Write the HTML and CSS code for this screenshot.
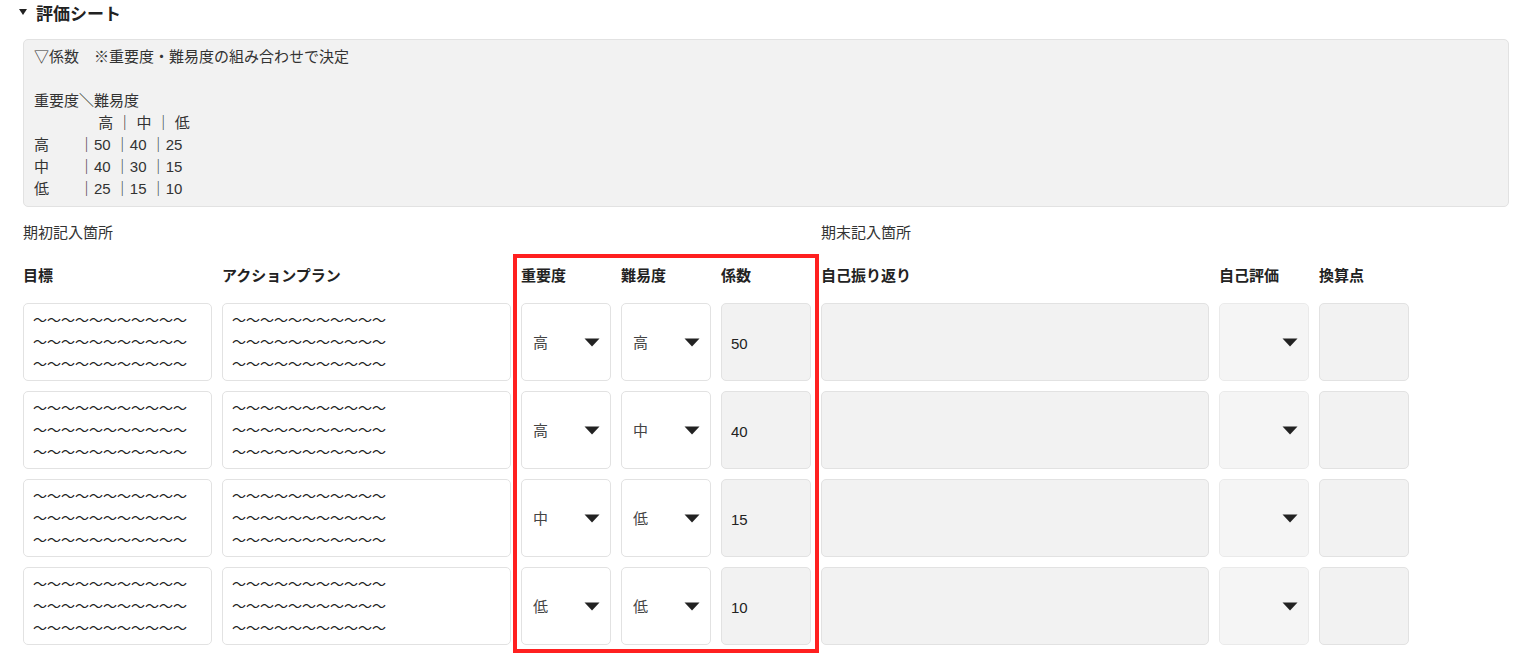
FILE: index.html
```html
<!DOCTYPE html>
<html lang="ja">
  <head>
    <meta charset="UTF-8" />
    <meta name="viewport" content="width=device-width, initial-scale=1.0" />
    <title>評価シート</title>
    <link rel="stylesheet" href="styles.css">
  </head>
  <body>
    <details class="sheet" open>
      <summary class="sheet-title">評価シート</summary>

      <div class="coef-note">▽係数　※重要度・難易度の組み合わせで決定

重要度＼難易度
　　　　 高 ｜ 中 ｜ 低
高　　｜50 ｜40 ｜25
中　　｜40 ｜30 ｜15
低　　｜25 ｜15 ｜10</div>

      <div class="eval-grid">
        <div class="section-label start">期初記入箇所</div>
        <div class="section-label end">期末記入箇所</div>

        <div class="col-head">目標</div>
        <div class="col-head">アクションプラン</div>
        <div class="col-head">重要度</div>
        <div class="col-head">難易度</div>
        <div class="col-head">係数</div>
        <div class="col-head">自己振り返り</div>
        <div class="col-head">自己評価</div>
        <div class="col-head">換算点</div>

        <!-- row 1 -->
        <textarea class="field">〜〜〜〜〜〜〜〜〜〜〜
〜〜〜〜〜〜〜〜〜〜〜
〜〜〜〜〜〜〜〜〜〜〜</textarea>
        <textarea class="field">〜〜〜〜〜〜〜〜〜〜〜
〜〜〜〜〜〜〜〜〜〜〜
〜〜〜〜〜〜〜〜〜〜〜</textarea>
        <div class="select-wrap">
          <select class="field"><option selected>高</option><option>中</option><option>低</option></select>
          <svg class="caret" width="16" height="9" viewBox="0 0 16 9"><path d="M0.5 0.5 H15.5 L8 8.5 Z" /></svg>
        </div>
        <div class="select-wrap">
          <select class="field"><option selected>高</option><option>中</option><option>低</option></select>
          <svg class="caret" width="16" height="9" viewBox="0 0 16 9"><path d="M0.5 0.5 H15.5 L8 8.5 Z" /></svg>
        </div>
        <input class="field readonly num" type="text" value="50" readonly />
        <textarea class="field readonly" readonly></textarea>
        <div class="select-wrap">
          <select class="field readonly" disabled><option></option></select>
          <svg class="caret" width="16" height="9" viewBox="0 0 16 9"><path d="M0.5 0.5 H15.5 L8 8.5 Z" /></svg>
        </div>
        <input class="field readonly num" type="text" value="" readonly />

        <!-- row 2 -->
        <textarea class="field">〜〜〜〜〜〜〜〜〜〜〜
〜〜〜〜〜〜〜〜〜〜〜
〜〜〜〜〜〜〜〜〜〜〜</textarea>
        <textarea class="field">〜〜〜〜〜〜〜〜〜〜〜
〜〜〜〜〜〜〜〜〜〜〜
〜〜〜〜〜〜〜〜〜〜〜</textarea>
        <div class="select-wrap">
          <select class="field"><option selected>高</option><option>中</option><option>低</option></select>
          <svg class="caret" width="16" height="9" viewBox="0 0 16 9"><path d="M0.5 0.5 H15.5 L8 8.5 Z" /></svg>
        </div>
        <div class="select-wrap">
          <select class="field"><option>高</option><option selected>中</option><option>低</option></select>
          <svg class="caret" width="16" height="9" viewBox="0 0 16 9"><path d="M0.5 0.5 H15.5 L8 8.5 Z" /></svg>
        </div>
        <input class="field readonly num" type="text" value="40" readonly />
        <textarea class="field readonly" readonly></textarea>
        <div class="select-wrap">
          <select class="field readonly" disabled><option></option></select>
          <svg class="caret" width="16" height="9" viewBox="0 0 16 9"><path d="M0.5 0.5 H15.5 L8 8.5 Z" /></svg>
        </div>
        <input class="field readonly num" type="text" value="" readonly />

        <!-- row 3 -->
        <textarea class="field">〜〜〜〜〜〜〜〜〜〜〜
〜〜〜〜〜〜〜〜〜〜〜
〜〜〜〜〜〜〜〜〜〜〜</textarea>
        <textarea class="field">〜〜〜〜〜〜〜〜〜〜〜
〜〜〜〜〜〜〜〜〜〜〜
〜〜〜〜〜〜〜〜〜〜〜</textarea>
        <div class="select-wrap">
          <select class="field"><option>高</option><option selected>中</option><option>低</option></select>
          <svg class="caret" width="16" height="9" viewBox="0 0 16 9"><path d="M0.5 0.5 H15.5 L8 8.5 Z" /></svg>
        </div>
        <div class="select-wrap">
          <select class="field"><option>高</option><option>中</option><option selected>低</option></select>
          <svg class="caret" width="16" height="9" viewBox="0 0 16 9"><path d="M0.5 0.5 H15.5 L8 8.5 Z" /></svg>
        </div>
        <input class="field readonly num" type="text" value="15" readonly />
        <textarea class="field readonly" readonly></textarea>
        <div class="select-wrap">
          <select class="field readonly" disabled><option></option></select>
          <svg class="caret" width="16" height="9" viewBox="0 0 16 9"><path d="M0.5 0.5 H15.5 L8 8.5 Z" /></svg>
        </div>
        <input class="field readonly num" type="text" value="" readonly />

        <!-- row 4 -->
        <textarea class="field">〜〜〜〜〜〜〜〜〜〜〜
〜〜〜〜〜〜〜〜〜〜〜
〜〜〜〜〜〜〜〜〜〜〜</textarea>
        <textarea class="field">〜〜〜〜〜〜〜〜〜〜〜
〜〜〜〜〜〜〜〜〜〜〜
〜〜〜〜〜〜〜〜〜〜〜</textarea>
        <div class="select-wrap">
          <select class="field"><option>高</option><option>中</option><option selected>低</option></select>
          <svg class="caret" width="16" height="9" viewBox="0 0 16 9"><path d="M0.5 0.5 H15.5 L8 8.5 Z" /></svg>
        </div>
        <div class="select-wrap">
          <select class="field"><option>高</option><option>中</option><option selected>低</option></select>
          <svg class="caret" width="16" height="9" viewBox="0 0 16 9"><path d="M0.5 0.5 H15.5 L8 8.5 Z" /></svg>
        </div>
        <input class="field readonly num" type="text" value="10" readonly />
        <textarea class="field readonly" readonly></textarea>
        <div class="select-wrap">
          <select class="field readonly" disabled><option></option></select>
          <svg class="caret" width="16" height="9" viewBox="0 0 16 9"><path d="M0.5 0.5 H15.5 L8 8.5 Z" /></svg>
        </div>
        <input class="field readonly num" type="text" value="" readonly />

        <!-- red frame around the coefficient columns -->
        <div class="highlight"></div>
      </div>
    </details>
  </body>
</html>
```

FILE: styles.css
```css
body {
  margin: 0;
  font-family: "Liberation Sans", "Noto Sans CJK JP", sans-serif;
  font-size: 15px;
  color: #222;
  background-color: #fff;
}

.sheet {
  padding: 0 15px 0 23px;
}

.sheet-title {
  display: flex;
  align-items: center;
  height: 24px;
  margin-left: -4px;
  font-size: 17px;
  font-weight: bold;
  list-style: none;
  cursor: pointer;
}

.sheet-title::-webkit-details-marker {
  display: none;
}

.sheet-title::before {
  content: "";
  margin-right: 9px;
  border-left: 4px solid transparent;
  border-right: 4px solid transparent;
  border-top: 6px solid #222;
}

.coef-note {
  margin-top: 15px;
  padding: 6px 10px;
  line-height: 22px;
  white-space: pre;
  color: #333;
  background-color: #f2f2f2;
  border: 1px solid #e2e2e2;
  border-radius: 5px;
}

.eval-grid {
  position: relative;
  display: grid;
  grid-template-columns: 189px 289px 90px 90px 90px 388px 90px 90px;
  grid-template-rows: auto auto repeat(4, 78px);
  column-gap: 10px;
  row-gap: 10px;
  margin-top: 15px;
  padding-bottom: 12px;
}

.section-label {
  line-height: 22px;
  color: #333;
  margin-bottom: 11px;
}

.section-label.start {
  grid-column: 1 / 6;
}

.section-label.end {
  grid-column: 6 / 9;
}

.col-head {
  line-height: 22px;
  font-weight: bold;
  margin-bottom: 6px;
}

.field {
  box-sizing: border-box;
  width: 100%;
  height: 78px;
  margin: 0;
  font-family: inherit;
  font-size: 15px;
  color: #222;
  background-color: #fff;
  border: 1px solid #e2e2e2;
  border-radius: 5px;
  outline: none;
}

textarea.field {
  display: block;
  padding: 5px 9px;
  font-size: 14px;
  line-height: 22px;
  resize: none;
  overflow: hidden;
}

select.field {
  padding: 0 11px;
  color: #444;
  appearance: none;
  -webkit-appearance: none;
}

.field.readonly {
  background-color: #f2f2f2;
}

.field.num {
  padding: 2px 9px 0;
}

.select-wrap {
  position: relative;
}

.caret {
  position: absolute;
  top: 35px;
  right: 11px;
  fill: #222;
  pointer-events: none;
}

.highlight {
  position: absolute;
  grid-column: 3 / 6;
  grid-row: 2 / 7;
  top: -11px;
  bottom: -8px;
  left: -8px;
  right: -8px;
  border: 4px solid #ff2020;
  pointer-events: none;
}
```
